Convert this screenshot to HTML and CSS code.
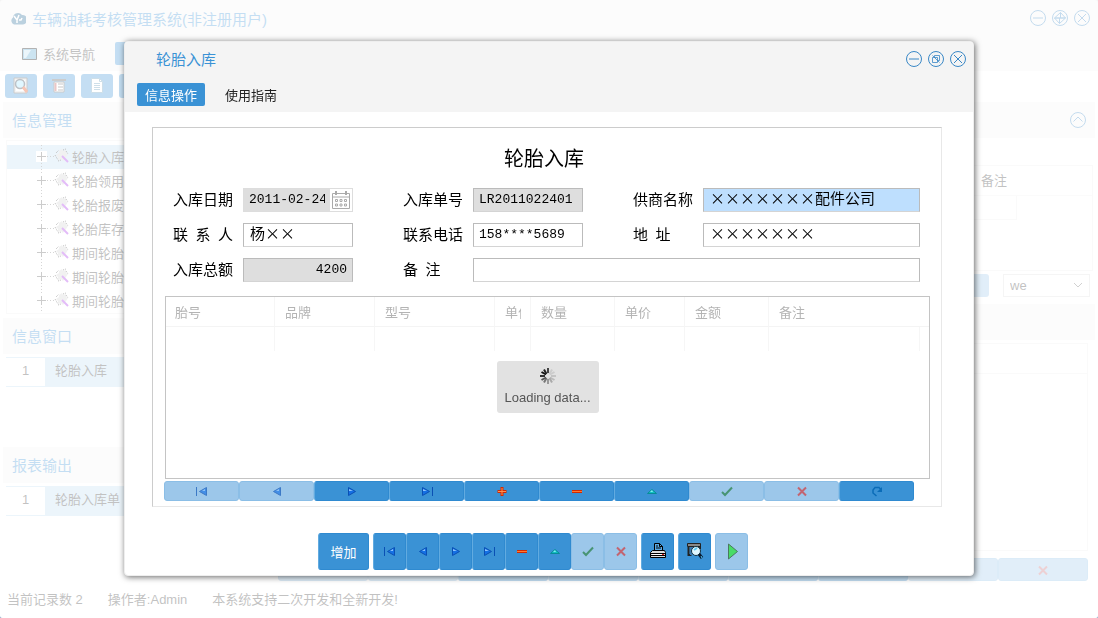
FILE: index.html
```html
<!DOCTYPE html>
<html lang="zh-CN">
<head>
    <meta charset="UTF-8">
    <meta name="viewport" content="width=device-width, initial-scale=1.0">
    <title>车辆油耗考核管理系统</title>
    <link rel="stylesheet" href="styles.css">
</head>
<body>
    <svg class="sprite" aria-hidden="true">
        <symbol id="i-first" viewBox="0 0 14 12"><path d="M1.500 2v9" stroke="#0a50b4"/><path d="M11.500 2.500v8l-7-4z" fill="#1470e4" stroke="#0a50b4"/><path d="M7 6l3-2v2z" fill="#8cc4ff"/></symbol>
        <symbol id="i-prev" viewBox="0 0 14 12"><path d="M10.500 2.500v8l-7-4z" fill="#1470e4" stroke="#0a50b4"/><path d="M6 6l3-2v2z" fill="#8cc4ff"/></symbol>
        <symbol id="i-next" viewBox="0 0 14 12"><path d="M3.500 2.500v8l7-4z" fill="#1470e4" stroke="#0a50b4"/><path d="M4 4v2h4z" fill="#8cc4ff"/></symbol>
        <symbol id="i-last" viewBox="0 0 14 12"><path d="M2.500 2.500v8l7-4z" fill="#1470e4" stroke="#0a50b4"/><path d="M3 4v2h4z" fill="#8cc4ff"/><path d="M12.500 2v9" stroke="#0a50b4"/></symbol>
        <symbol id="i-plus" viewBox="0 0 14 12"><path d="M7 2v9M2.500 6.500h9" stroke="#d42a00" stroke-width="3"/><path d="M7 3v7M3 6.500h8" stroke="#ff9050"/></symbol>
        <symbol id="i-minus" viewBox="0 0 14 12"><path d="M2 6.500h10" stroke="#d42a00" stroke-width="3"/><path d="M2 6.500h10" stroke="#ff7a30"/></symbol>
        <symbol id="i-up" viewBox="0 0 14 12"><path d="M7 4.500l4.500 4h-9z" fill="#12c0c4" stroke="#078c98"/><path d="M7 5l1 2H5z" fill="#7cf0ee"/></symbol>
        <symbol id="i-check" viewBox="0 0 14 12"><path d="M2 7l3 3 7-7.500" fill="none" stroke="#1c7a34" stroke-width="2"/></symbol>
        <symbol id="i-cross" viewBox="0 0 14 12"><path d="M3 2.500l8 8M11 2.500l-8 8" stroke="#d83030" stroke-width="2"/></symbol>
        <symbol id="i-refresh" viewBox="0 0 14 12"><path d="M6.500 11L3 8V5l2-2.500h4l2 2" fill="none" stroke="#0a6cb8" stroke-width="1.500"/><path d="M12 2v5H7z" fill="#0a6cb8"/></symbol>
        <symbol id="i-plus-box" viewBox="0 0 11 11"><path d="M5.500 1v9M1 5.500h9" stroke="#555"/></symbol>
        <symbol id="i-tool" viewBox="0 0 16 16"><path d="M8 1l1 2 3-1v3l2 1-2 3-3 4-2-2-3 1v-3L2 7l3-2V3z" fill="#d0d0d0"/><path d="M2 5l3-3M1 7l3 5M4 13l3-1M9 2l3-1M12 3l2 3" fill="none" stroke="#222" stroke-dasharray="1 1"/><path d="M8 8l6 6" stroke="#a020e8" stroke-width="2"/></symbol>
        <symbol id="i-search-page" viewBox="0 0 18 18"><path d="M2 1h13v15H2z" fill="#ddd" stroke="#555"/><path d="M4 3h9v11H4z" fill="#fff"/><circle cx="8" cy="7" r="4.500" fill="#9ce4ff" stroke="#234" stroke-width="1.500"/><path d="M11 10l4 5" stroke="#e0400a" stroke-width="3"/></symbol>
        <symbol id="i-min" viewBox="0 0 16 16"><circle cx="8" cy="8" r="7.500"/><path d="M3 8h10"/></symbol>
        <symbol id="i-restore" viewBox="0 0 16 16"><circle cx="8" cy="8" r="7.500"/><path d="M4.500 6.500h5v5h-5zM6.500 6.500v-2h5v5h-2M4.500 4.500l7 7" stroke-width=".8"/></symbol>
        <symbol id="i-max" viewBox="0 0 16 16"><circle cx="8" cy="8" r="7.500"/><path d="M8.500 2.500V8h5zM7.500 13.500V8h-5zM8.500 8H2.500l6-5.500M7.500 8h6l-6 5.500"/></symbol>
        <symbol id="i-close" viewBox="0 0 16 16"><circle cx="8" cy="8" r="7.500"/><path d="M4 4l8 8M12 4l-8 8"/></symbol>
    </svg>

    <div class="app">
        <header class="titlebar">
            <svg class="logo" viewBox="0 0 16 13"><path d="M4 12.500a4 4 0 0 1-1-7A5 5 0 0 1 12 3a4 4 0 0 1 1 9.500z" fill="#1c6494"/><path d="M4 4l3 4 2-5M7 8v3M9 8h2l1-2" fill="none" stroke="#fff" stroke-width="1.500"/></svg>
            <span class="app-title">车辆油耗考核管理系统(非注册用户)</span>
            <div class="win-btns">
                <button type="button" aria-label="最小化"><svg><use href="#i-min"/></svg></button>
                <button type="button" aria-label="最大化"><svg><use href="#i-max"/></svg></button>
                <button type="button" aria-label="关闭"><svg><use href="#i-close"/></svg></button>
            </div>
        </header>
        <nav class="menubar">
            <a href="#" class="menu-item">
                <svg class="monitor" viewBox="0 0 15 12"><path d="M.5.500h14v11H.5z" fill="#54a4d0" stroke="#000"/><path d="M2 2h7L4 10H2z" fill="#bfe0f0"/></svg>
                系统导航
            </a>
            <span class="menu-active"></span>
        </nav>
        <div class="toolbar">
            <button type="button" class="tool" aria-label="查询"><svg><use href="#i-search-page"/></svg></button>
            <button type="button" class="tool" aria-label="列表"><svg viewBox="0 0 18 18"><path d="M2 3h14" stroke="#555" stroke-width="2"/><path d="M4 5h10v10H4z" fill="#fff" stroke="#555"/><path d="M8 7h5M8 10h5M8 13h5" stroke="#444"/><path d="M5.500 6v8" stroke="#b44" stroke-width="2"/></svg></button>
            <button type="button" class="tool" aria-label="文档"><svg viewBox="0 0 18 18"><path d="M3.500 1.500h8l3 3v11h-11z" fill="#fff" stroke="#5b94b4"/><path d="M11.500 1.500v3h3M6 6.500h6M6 8.500h6M6 10.500h6M6 12.500h6" stroke="#5b94b4" fill="none"/></svg></button>
            <button type="button" class="tool" aria-label="更多"></button>
        </div>

        <main class="main">
            <aside class="side">
                <h2 class="band">信息管理</h2>
                <ul class="tree">
                    <li class="selected"><svg class="toggle"><use href="#i-plus-box"/></svg><svg class="node"><use href="#i-tool"/></svg>轮胎入库</li>
                    <li><svg class="toggle"><use href="#i-plus-box"/></svg><svg class="node"><use href="#i-tool"/></svg>轮胎领用</li>
                    <li><svg class="toggle"><use href="#i-plus-box"/></svg><svg class="node"><use href="#i-tool"/></svg>轮胎报废</li>
                    <li><svg class="toggle"><use href="#i-plus-box"/></svg><svg class="node"><use href="#i-tool"/></svg>轮胎库存</li>
                    <li><svg class="toggle"><use href="#i-plus-box"/></svg><svg class="node"><use href="#i-tool"/></svg>期间轮胎</li>
                    <li><svg class="toggle"><use href="#i-plus-box"/></svg><svg class="node"><use href="#i-tool"/></svg>期间轮胎</li>
                    <li><svg class="toggle"><use href="#i-plus-box"/></svg><svg class="node"><use href="#i-tool"/></svg>期间轮胎</li>
                </ul>
                <h2 class="band">信息窗口</h2>
                <div class="list">
                    <div class="list-row"><span class="num">1</span><span class="name">轮胎入库</span></div>
                </div>
                <h2 class="band">报表输出</h2>
                <div class="list">
                    <div class="list-row"><span class="num">1</span><span class="name">轮胎入库单</span></div>
                </div>
            </aside>

            <section class="content">
                <div class="band band-right">
                    <button type="button" class="collapse" aria-label="收起"><svg viewBox="0 0 16 16"><circle cx="8" cy="8" r="7.500"/><path d="M3.500 9.500L8 5l4.500 4.500"/></svg></button>
                </div>
                <div class="panel">
                    <div class="panel-head"><span>备注</span></div>
                    <div class="panel-row"></div>
                </div>
                <div class="filter">
                    <button type="button" class="filter-btn" aria-label="查找"></button>
                    <div class="select">
                        <select aria-label="字段"><option>we</option></select>
                        <svg viewBox="0 0 10 6"><path d="M1 1l4 4 4-4" fill="none" stroke="#666"/></svg>
                    </div>
                </div>
                <div class="band band-mid"></div>
                <div class="detail"><div class="detail-head"></div></div>
                <div class="navigator nav-back">
                    <button type="button" aria-label="首条" disabled><svg><use href="#i-first"/></svg></button>
                    <button type="button" aria-label="上一条" disabled><svg><use href="#i-prev"/></svg></button>
                    <button type="button" aria-label="下一条"><svg><use href="#i-next"/></svg></button>
                    <button type="button" aria-label="末条"><svg><use href="#i-last"/></svg></button>
                    <button type="button" aria-label="新增"><svg><use href="#i-plus"/></svg></button>
                    <button type="button" aria-label="删除"><svg><use href="#i-minus"/></svg></button>
                    <button type="button" aria-label="编辑"><svg><use href="#i-up"/></svg></button>
                    <button type="button" aria-label="保存" disabled></button>
                    <button type="button" aria-label="取消" disabled><svg><use href="#i-cross"/></svg></button>
                </div>
            </section>
        </main>

        <footer class="status">
            <span>当前记录数 2</span>
            <span>操作者:Admin</span>
            <span>本系统支持二次开发和全新开发!</span>
        </footer>
    </div>

    <div class="overlay">
        <div class="dialog" role="dialog" aria-labelledby="dlg-title">
            <div class="dialog-head">
                <div class="dialog-title">
                    <span id="dlg-title">轮胎入库</span>
                    <div class="win-btns">
                        <button type="button" aria-label="最小化"><svg><use href="#i-min"/></svg></button>
                        <button type="button" aria-label="还原"><svg><use href="#i-restore"/></svg></button>
                        <button type="button" aria-label="关闭"><svg><use href="#i-close"/></svg></button>
                    </div>
                </div>
                <div class="tabs">
                    <button type="button" class="tab active">信息操作</button>
                    <button type="button" class="tab">使用指南</button>
                </div>
            </div>

            <div class="dialog-body">
                <div class="sheet">
                    <h1>轮胎入库</h1>
                    <form class="form">
                        <label for="date">入库日期</label>
                        <div class="date-field">
                            <input type="text" id="date" class="mono" value="2011-02-24">
                            <button type="button" aria-label="选择日期"><svg viewBox="0 0 18 18"><path d="M.5 2.500h17v15H.5zM.5 6h17" fill="none" stroke="#aaa"/><path d="M4 0v4M14 0v4" stroke="#aaa" stroke-width="2"/><path d="M3.500 8.500h2v2h-2zM8 8.500h2v2H8zM12.500 8.500h2v2h-2zM3.500 13h2v2h-2zM8 13h2v2H8zM12.500 13h2v2h-2z" fill="none" stroke="#aaa"/></svg></button>
                        </div>
                        <label for="no">入库单号</label>
                        <input type="text" id="no" class="mono" value="LR2011022401" readonly>
                        <label for="supplier">供商名称</label>
                        <input type="text" id="supplier" class="focus" value="×××××××配件公司">

                        <label for="contact" class="spread"><span>联</span><span>系</span><span>人</span></label>
                        <input type="text" id="contact" value="杨××">
                        <label for="phone">联系电话</label>
                        <input type="text" id="phone" class="mono" value="158****5689">
                        <label for="address">地&ensp;址</label>
                        <input type="text" id="address" value="×××××××">

                        <label for="total">入库总额</label>
                        <input type="text" id="total" class="mono right" value="4200" readonly>
                        <label for="remark">备&ensp;注</label>
                        <input type="text" id="remark" class="wide">
                    </form>

                    <div class="grid">
                        <table>
                            <colgroup>
                                <col class="c-no"><col class="c-brand"><col class="c-model"><col class="c-unit"><col class="c-qty"><col class="c-price"><col class="c-sum"><col class="c-note"><col>
                            </colgroup>
                            <thead>
                                <tr><th>胎号</th><th>品牌</th><th>型号</th><th><div class="clip">单位</div></th><th>数量</th><th>单价</th><th>金额</th><th>备注</th><th></th></tr>
                            </thead>
                            <tbody>
                                <tr><td></td><td></td><td></td><td></td><td></td><td></td><td></td><td></td><td></td></tr>
                            </tbody>
                        </table>
                        <div class="loading">
                            <svg viewBox="0 0 16 16" stroke-width="2">
                                <path d="M8 0v5" stroke="#444"/><path d="M12 1.500L9.500 6" stroke="#ccc"/><path d="M14.500 4L10 6.500" stroke="#ccc"/><path d="M16 8h-5" stroke="#c4c4c4"/><path d="M14.500 12L10 9.500" stroke="#bbb"/><path d="M12 14.500L9.500 10" stroke="#aaa"/><path d="M8 16v-5" stroke="#999"/><path d="M4 14.500L6.500 10" stroke="#777"/><path d="M1.500 12L6 9.500" stroke="#555"/><path d="M0 8h5" stroke="#333"/><path d="M1.500 4L6 6.500" stroke="#111"/><path d="M4 1.500L6.500 6" stroke="#222"/>
                            </svg>
                            <span>Loading data...</span>
                        </div>
                    </div>

                    <div class="navigator">
                        <button type="button" aria-label="首条" disabled><svg><use href="#i-first"/></svg></button>
                        <button type="button" aria-label="上一条" disabled><svg><use href="#i-prev"/></svg></button>
                        <button type="button" aria-label="下一条"><svg><use href="#i-next"/></svg></button>
                        <button type="button" aria-label="末条"><svg><use href="#i-last"/></svg></button>
                        <button type="button" aria-label="新增"><svg><use href="#i-plus"/></svg></button>
                        <button type="button" aria-label="删除"><svg><use href="#i-minus"/></svg></button>
                        <button type="button" aria-label="编辑"><svg><use href="#i-up"/></svg></button>
                        <button type="button" aria-label="保存" disabled><svg><use href="#i-check"/></svg></button>
                        <button type="button" aria-label="取消" disabled><svg><use href="#i-cross"/></svg></button>
                        <button type="button" aria-label="刷新"><svg><use href="#i-refresh"/></svg></button>
                    </div>
                </div>

                <div class="actions">
                    <button type="button" class="btn btn-text">增加</button>
                    <div class="group">
                        <button type="button" class="btn" aria-label="首条"><svg><use href="#i-first"/></svg></button>
                        <button type="button" class="btn" aria-label="上一条"><svg><use href="#i-prev"/></svg></button>
                        <button type="button" class="btn" aria-label="下一条"><svg><use href="#i-next"/></svg></button>
                        <button type="button" class="btn" aria-label="末条"><svg><use href="#i-last"/></svg></button>
                        <button type="button" class="btn" aria-label="删除"><svg><use href="#i-minus"/></svg></button>
                        <button type="button" class="btn" aria-label="编辑"><svg><use href="#i-up"/></svg></button>
                        <button type="button" class="btn" aria-label="保存" disabled><svg><use href="#i-check"/></svg></button>
                        <button type="button" class="btn" aria-label="取消" disabled><svg><use href="#i-cross"/></svg></button>
                    </div>
                    <button type="button" class="btn" aria-label="打印"><svg class="big" viewBox="0 0 18 18"><path d="M5.500 8.500v-7h5l3 3v4" fill="#5aaae4" stroke="#000"/><path d="M10.500 1.500v3h3M7 4h2M7 6h5" fill="none" stroke="#000"/><path d="M3.500 8.500h12l1 2v5h-15v-5z" fill="#ddd" stroke="#000"/><path d="M2 11.500h14M2 13.500h14" stroke="#000"/><path d="M3 12.500h10" stroke="#fff"/><path d="M13 12.500h2" stroke="#e22"/></svg></button>
                    <button type="button" class="btn" aria-label="预览"><svg class="big" viewBox="0 0 18 18"><path d="M1.500 1.500h13v3h-13z" fill="#888" stroke="#222"/><path d="M2.500 5v8h3M14 4v3" fill="none" stroke="#222" stroke-width="2"/><path d="M4 5h9v8H4z" fill="#3a78b0"/><circle cx="10" cy="9" r="4.500" fill="#dff6ff" stroke="#134" /><path d="M8 8l3-2" stroke="#5cc8f0" stroke-width="2"/><path d="M13 12l3 4" stroke="#0a1c30" stroke-width="3"/><path d="M15 14l1 2" stroke="#4cc8ff"/></svg></button>
                    <button type="button" class="btn run" aria-label="执行"><svg class="big" viewBox="0 0 18 18"><path d="M5.500 2v15l9-7.500z" fill="#48dc68" stroke="#4a7a60"/></svg></button>
                </div>
            </div>
        </div>
    </div>
</body>
</html>
```
FILE: styles.css
```css
* {
    box-sizing: border-box;
}
body, html {
    margin: 0;
    padding: 0;
    background-color: #9bb0cc;
    font-family: "Liberation Sans", "Noto Sans CJK SC", sans-serif;
    font-size: 13px;
    color: #333;
}
button, input, select {
    font-family: inherit;
    font-size: 13px;
    margin: 0;
    padding: 0;
}
button {
    border: none;
    background: none;
    cursor: pointer;
}
.sprite {
    display: none;
}

/* main window */
.app {
    display: flex;
    flex-direction: column;
    min-height: 100vh;
    padding: 0 3px;
    background: #fff;
    border-radius: 3px;
}
.titlebar {
    display: flex;
    align-items: center;
    height: 38px;
    margin: 0 -3px;
    padding: 0 8px 2px 10px;
    background: #f4f4f4;
    color: #3a92d5;
}
.logo {
    width: 16px;
    height: 13px;
    margin-right: 6px;
}
.app-title {
    flex: 1;
    font-size: 15px;
}
.win-btns {
    display: flex;
    gap: 6px;
}
.win-btns button, .collapse {
    width: 16px;
    height: 16px;
}
.win-btns svg, .collapse svg {
    display: block;
    width: 16px;
    height: 16px;
    fill: none;
    stroke: #3a88c6;
}
.menubar {
    display: flex;
    align-items: center;
    height: 33px;
    margin: 0 -3px;
    padding: 0 0 2px 22px;
    background: #f4f4f4;
}
.menu-item {
    display: flex;
    align-items: center;
    width: 93px;
    color: #333;
    text-decoration: none;
}
.monitor {
    width: 15px;
    height: 12px;
    margin-right: 6px;
}
.menu-active {
    width: 70px;
    height: 23px;
    background: #3a92d5;
    border-radius: 2px;
}
.toolbar {
    display: flex;
    align-items: center;
    gap: 6px;
    height: 31px;
    padding: 0 0 2px 2px;
}
.tool {
    width: 32px;
    height: 24px;
    background: #3a92d5;
    border-radius: 3px;
}
.tool svg {
    display: block;
    width: 18px;
    height: 18px;
    margin: 0 auto;
}
.main {
    flex: 1;
    display: grid;
    grid-template-columns: 270px 1fr;
    column-gap: 2px;
}
.band {
    height: 36px;
    margin: 0;
    padding-left: 9px;
    line-height: 38px;
    background: #f4f4f4;
    font-size: 15px;
    font-weight: normal;
    color: #3a92d5;
}
.tree {
    height: 174px;
    margin: 2px 0 4px 3px;
    padding: 4px 0 0;
    border: 1px solid #eee;
    list-style: none;
}
.tree li {
    display: flex;
    align-items: center;
    height: 24px;
    padding: 0 0 2px 29px;
    background: repeating-linear-gradient(#777 0 1px, transparent 1px 3px) 34px 0 / 1px 100% no-repeat,
                repeating-linear-gradient(90deg, #777 0 1px, transparent 1px 3px) 40px 11px / 9px 1px no-repeat;
}
.tree .selected {
    background-color: #bfdcf0;
}
.toggle {
    width: 11px;
    height: 11px;
    margin-right: 7px;
    background: #fff;
}
.node {
    width: 16px;
    height: 16px;
    margin-right: 2px;
}
.list {
    height: 93px;
    padding: 3px 0 0 3px;
}
.list-row {
    display: flex;
    height: 30px;
    line-height: 26px;
    border-top: 1px solid #bfdcf0;
    border-bottom: 1px solid #bfdcf0;
}
.num {
    width: 39px;
    text-align: center;
}
.name {
    flex: 1;
    padding-left: 10px;
    background: #bfdcf0;
}
.content {
    display: flex;
    flex-direction: column;
    min-width: 0;
}
.band-right {
    display: flex;
    align-items: center;
    justify-content: flex-end;
    padding-right: 9px;
}
.panel {
    height: 106px;
    margin: 27px 2px 0 3px;
    border: 1px solid #eee;
}
.panel-head {
    height: 30px;
    line-height: 30px;
    border-bottom: 1px solid #f0f0f0;
    text-align: right;
}
.panel-head span {
    display: inline-block;
    width: 111px;
    text-align: left;
}
.panel-row {
    height: 24px;
    margin-right: 75px;
    border-right: 1px solid #eee;
    border-bottom: 1px solid #eee;
}
.filter {
    display: flex;
    justify-content: flex-end;
    gap: 14px;
    height: 33px;
    padding: 3px 5px 0 0;
}
.filter-btn {
    width: 75px;
    height: 23px;
    background: #9cc7ea;
    border-radius: 3px;
}
.select {
    position: relative;
    width: 87px;
    height: 23px;
}
.select select {
    width: 100%;
    height: 100%;
    padding-left: 6px;
    appearance: none;
    border: 1px solid #ddd;
    background: #fff;
    color: #333;
}
.select svg {
    position: absolute;
    right: 7px;
    top: 8px;
    width: 10px;
    height: 6px;
}
.detail {
    flex: 1;
    margin: 3px 7px 7px 3px;
    border: 1px solid #eee;
}
.detail-head {
    height: 30px;
    border-bottom: 1px solid #eee;
}
.status {
    display: flex;
    gap: 25px;
    height: 37px;
    padding-left: 4px;
    line-height: 37px;
}

/* record navigator */
.navigator {
    display: flex;
    height: 20px;
    margin: 2px 16px 0 0;
}
.navigator button, .btn {
    flex: 1;
    display: flex;
    align-items: center;
    justify-content: center;
    background: #3a92d5;
    border: 1px solid #2f8ad0;
    border-left-color: #62abe0;
    border-radius: 3px;
}
.navigator svg, .btn svg {
    width: 14px;
    height: 12px;
}
.navigator button:disabled, .btn:disabled {
    background: #9cc7ea;
    border-color: #8bbee6;
}
.navigator button:disabled svg, .btn:disabled svg {
    opacity: 0.65;
}
.nav-back {
    height: 23px;
    margin: 0 7px 0 3px;
}

/* dialog */
.overlay {
    position: fixed;
    inset: 0;
    display: flex;
    align-items: center;
    justify-content: center;
    padding-bottom: 2px;
    background: rgba(255, 255, 255, 0.7);
    border-radius: 3px;
}
.dialog {
    width: 850px;
    max-width: 96%;
    background: #fff;
    border: 1px solid #eee;
    border-radius: 4px;
    box-shadow: 1px 1px 6px rgba(0, 0, 0, 0.6);
}
.dialog-head {
    height: 70px;
    padding: 6px 7px 0 12px;
    background: #f4f4f4;
    border-radius: 3px 3px 0 0;
}
.dialog-title {
    display: flex;
    align-items: center;
    justify-content: space-between;
    height: 22px;
    padding-left: 19px;
    font-size: 15px;
    color: #3a92d5;
}
.tabs {
    display: flex;
    gap: 12px;
    padding-top: 13px;
}
.tab {
    height: 23px;
    padding: 0 8px;
    border-radius: 2px;
    color: #222;
}
.tab.active {
    background: #3a92d5;
    color: #fff;
}
.dialog-body {
    padding: 15px 31px 5px 27px;
}
.sheet {
    padding: 16px 11px 5px;
    border: 1px solid #ccc;
    border-right-color: #e8e8e8;
    border-bottom-color: #e8e8e8;
}
.sheet h1 {
    margin: 0 6px 14px 0;
    font-size: 20px;
    line-height: 30px;
    font-weight: normal;
    text-align: center;
    color: #000;
}
.form {
    display: grid;
    grid-template-columns: 70px 110px 120px 110px 120px 1fr;
    grid-auto-rows: 24px;
    row-gap: 11px;
    padding: 0 10px 0 9px;
}
.form label {
    padding-left: 50px;
    font-size: 15px;
    line-height: 24px;
    color: #000;
}
.form label:nth-of-type(3n+1) {
    padding-left: 0;
}
.form label.spread {
    display: flex;
    justify-content: space-between;
    padding-right: 10px;
}
.form input {
    width: 100%;
    min-width: 0;
    height: 24px;
    padding: 0 6px 4px;
    border: 1px solid #bbb;
    border-bottom-color: #d4d4d4;
    background: #fff;
    font-family: "Noto Sans CJK SC", sans-serif;
    font-size: 15px;
    line-height: 18px;
    color: #000;
}
.form .mono {
    padding: 0 5px 1px;
    font-family: "Liberation Mono", monospace;
    font-size: 13px;
}
.form input:read-only {
    background: #dedede;
}
.form .focus {
    background: #bedffe;
}
.form .right {
    text-align: right;
}
.form .wide {
    grid-column: 4 / 7;
}
.date-field {
    display: flex;
    border: 1px solid #ddd;
}
.form .date-field input {
    flex: 1;
    height: 22px;
    border: none;
    background: #dedede;
}
.date-field button {
    width: 22px;
    background: #fff;
}
.date-field svg {
    display: block;
    width: 18px;
    height: 18px;
    margin: 0 auto;
}
.grid {
    position: relative;
    height: 183px;
    margin: 14px 0 0 1px;
    border: 1px solid #c4c4c4;
}
.grid table {
    width: 100%;
    table-layout: fixed;
    border-collapse: separate;
    border-spacing: 0;
}
.c-no { width: 109px; }
.c-brand { width: 100px; }
.c-model { width: 120px; }
.c-unit { width: 36px; }
.c-qty { width: 84px; }
.c-price { width: 70px; }
.c-sum { width: 84px; }
.c-note { width: 151px; }
.grid th {
    height: 30px;
    padding: 0 0 0 10px;
    border-right: 1px solid #f6f6f6;
    border-bottom: 1px solid #f4f4f4;
    font-weight: normal;
    text-align: left;
    white-space: nowrap;
    color: #b4b4b4;
}
.grid th:first-child {
    padding-left: 9px;
}
.grid td {
    height: 24px;
    padding: 0;
    border-right: 1px solid #f6f6f6;
}
.grid th:nth-child(n+8), .grid td:last-child {
    border-right: none;
}
.clip {
    width: 16px;
    overflow: hidden;
}
.loading {
    position: absolute;
    left: 50%;
    top: 50%;
    transform: translate(-50%, -50%);
    display: flex;
    flex-direction: column;
    align-items: center;
    gap: 6px;
    width: 102px;
    height: 52px;
    padding-top: 7px;
    background: #e2e2e2;
    border-radius: 3px;
    color: #555;
}
.loading svg {
    width: 16px;
    height: 16px;
}
.actions {
    display: flex;
    justify-content: center;
    gap: 4px;
    margin-top: 26px;
    padding-right: 28px;
}
.group {
    display: flex;
}
.btn {
    flex: none;
    width: 33px;
    height: 37px;
}
.btn-text {
    width: 51px;
    color: #fff;
}
.btn svg.big {
    width: 18px;
    height: 18px;
}
.btn.run {
    background: #9cc7ea;
    border-color: #8bbee6;
}
```
